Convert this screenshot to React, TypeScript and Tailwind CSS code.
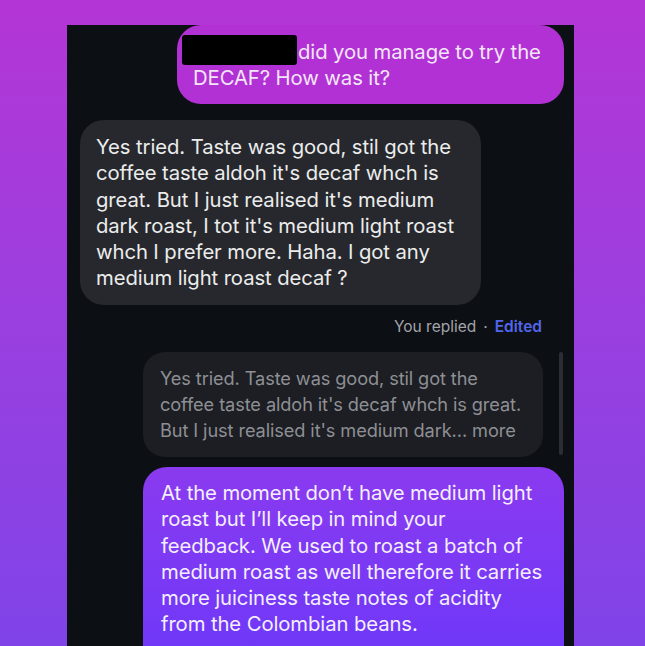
import React from "react";

const font = { fontFamily: "Inter, 'Liberation Sans', sans-serif" };

export default function App() {
  return (
    <div
      className="w-[645px] h-[646px] overflow-hidden bg-gradient-to-b from-[#b435d6] to-[#7f43e8] pt-[25px] pl-[67px]"
      style={font}
    >
      <div className="w-[507px] h-[621px] bg-[#0c0f14] flex flex-col overflow-hidden">
        {/* outgoing first bubble */}
        <div className="shrink-0 self-end mr-[10px] w-[387px] h-[79px] rounded-[24px] bg-[#b231d4] pl-[16px] pt-[14px] text-[20.3px] leading-[26px] text-[#f3e6f8] tracking-[-0.1px]">
          <div className="flex items-center whitespace-nowrap">
            <span className="inline-block w-[115px] h-[30px] bg-black rounded-[3px] -ml-[11px] mr-[1px] mt-[-4px]" />
            <span>did you manage to try the</span>
          </div>
          <div className="whitespace-nowrap">DECAF? How was it?</div>
        </div>

        {/* incoming */}
        <div className="shrink-0 ml-[13px] mt-[16px] w-[401px] h-[185px] rounded-[24px] bg-[#26282d] pl-[16px] pt-[14px] text-[20.3px] leading-[26.3px] text-[#ececec] whitespace-nowrap tracking-[-0.1px]">
          <div>Yes tried. Taste was good, stil got the</div>
          <div>coffee taste aldoh it's decaf whch is</div>
          <div>great. But I just realised it's medium</div>
          <div>dark roast, I tot it's medium light roast</div>
          <div>whch I prefer more. Haha. I got any</div>
          <div>medium light roast decaf ?</div>
        </div>

        {/* replied label */}
        <div className="shrink-0 self-end mr-[32px] mt-[11px] h-[22px] flex items-center text-[15.5px] whitespace-nowrap">
          <span className="text-[#a3a4a8]">You replied</span>
          <span className="text-[#a3a4a8] mx-[7px]">·</span>
          <span className="text-[#5266ec] font-semibold">Edited</span>
        </div>

        {/* quoted + scrollbar */}
        <div className="shrink-0 flex mt-[14px] ml-[76px]">
          <div className="w-[400px] h-[105px] rounded-[22px] bg-[#1c1e23] pl-[17px] pt-[13px] text-[18.2px] leading-[26px] text-[#8e8f94] whitespace-nowrap tracking-[-0.1px]">
            <div>Yes tried. Taste was good, stil got the</div>
            <div>coffee taste aldoh it's decaf whch is great.</div>
            <div>But I just realised it's medium dark... more</div>
          </div>
          <div className="ml-[16px] w-[4px] h-[103px] rounded-full bg-[#2b2d33]" />
        </div>

        {/* outgoing reply */}
        <div className="shrink-0 ml-[76px] mt-[10px] w-[421px] h-[200px] rounded-t-[24px] bg-gradient-to-b from-[#8a3aef] to-[#6d37f9] pl-[18px] pt-[13px] text-[20.3px] leading-[26.3px] text-[#f4efff] whitespace-nowrap tracking-[-0.1px]">
          <div>At the moment don’t have medium light</div>
          <div>roast but I’ll keep in mind your</div>
          <div>feedback. We used to roast a batch of</div>
          <div>medium roast as well therefore it carries</div>
          <div>more juiciness taste notes of acidity</div>
          <div>from the Colombian beans.</div>
        </div>
      </div>
    </div>
  );
}
